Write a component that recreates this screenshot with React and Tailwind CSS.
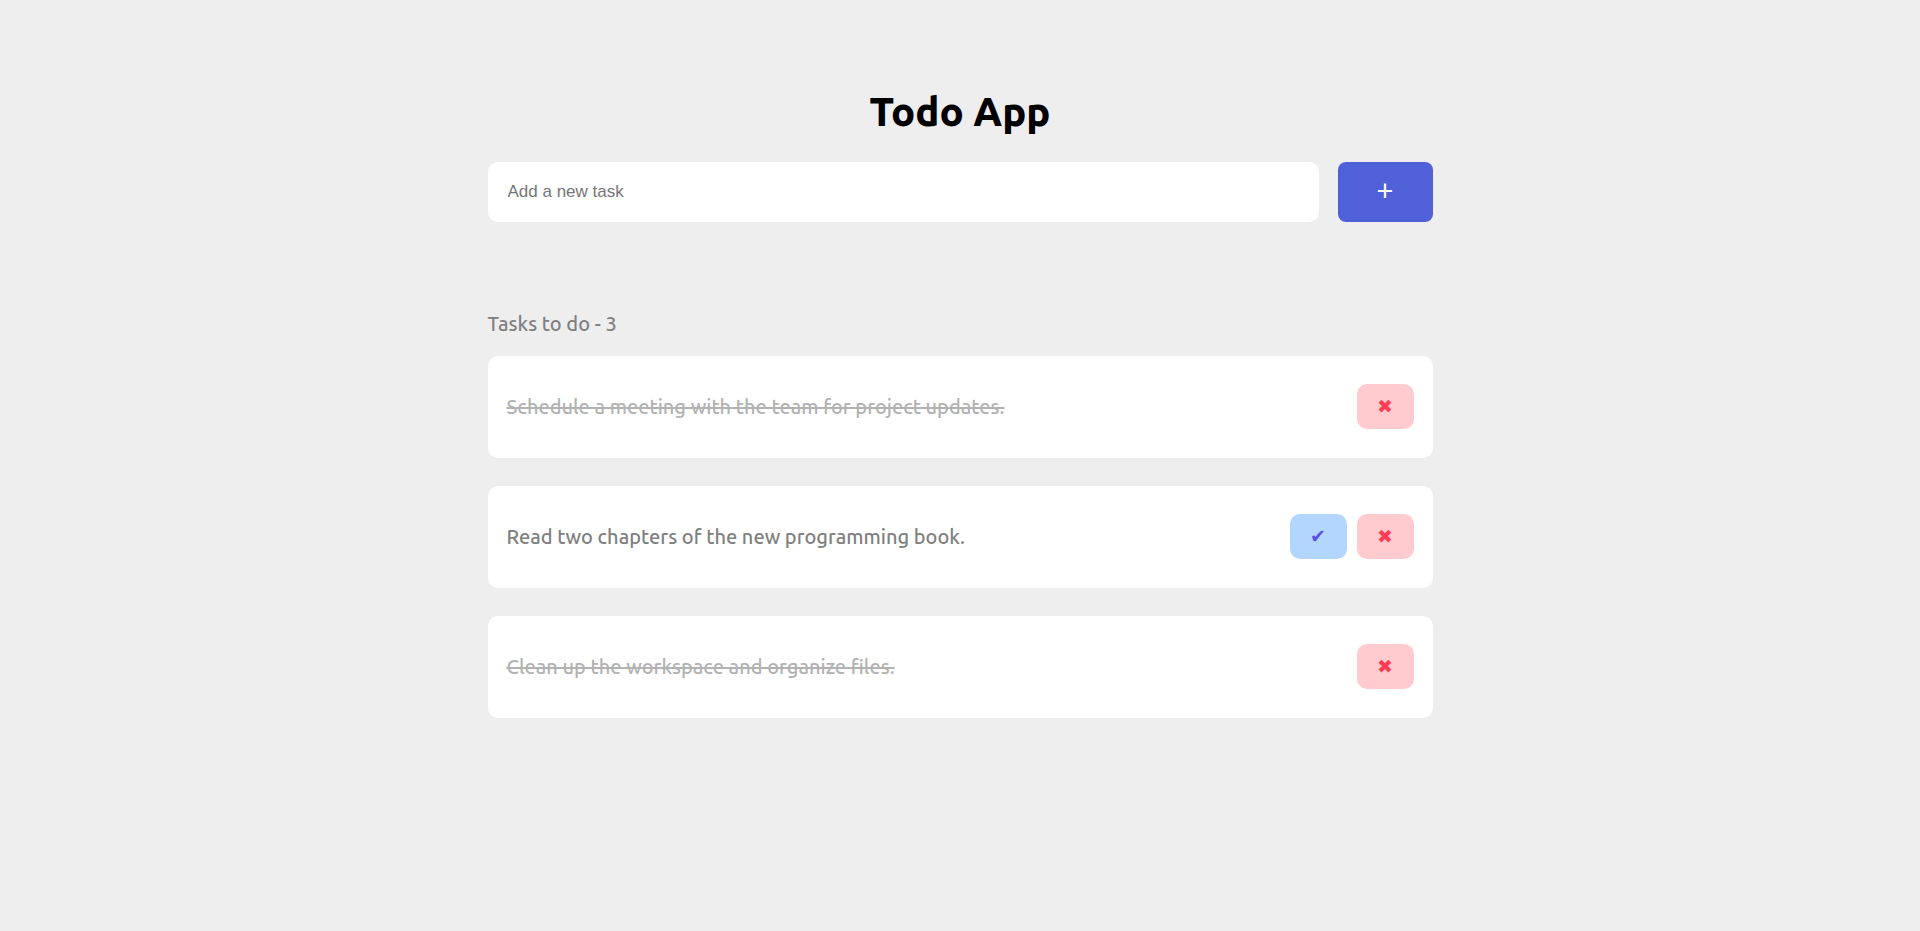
import { useState } from "react";

const initialTasks = [
  { id: 1, title: "Schedule a meeting with the team for project updates.", done: true },
  { id: 2, title: "Read two chapters of the new programming book.", done: false },
  { id: 3, title: "Clean up the workspace and organize files.", done: true },
];

function TaskButton({ label, className, onClick, children }) {
  return (
    <button
      type="button"
      aria-label={label}
      onClick={onClick}
      className={`flex h-[45px] w-[57px] items-center justify-center rounded-[10px] pb-[2px] font-['DejaVu_Sans',sans-serif] text-[19px] leading-6 font-normal ${className}`}
    >
      {children}
    </button>
  );
}

function Task({ task, onComplete, onRemove }) {
  return (
    <li className="flex items-center justify-between gap-4 rounded-[10px] bg-white px-[19px] pt-[28px] pb-[29px]">
      <span className={task.done ? "font-medium text-[#808080] line-through opacity-60" : "font-medium text-[#808080]"}>
        {task.title}
      </span>
      <div className="flex shrink-0 gap-[10px]">
        {!task.done && (
          <TaskButton label="Complete task" className="bg-[#b3d6ff] text-[#5b50e6]" onClick={onComplete}>
            ✔
          </TaskButton>
        )}
        <TaskButton label="Remove task" className="bg-[#ffcbcf] text-[#ff3d57]" onClick={onRemove}>
          ✖
        </TaskButton>
      </div>
    </li>
  );
}

export default function App() {
  const [tasks, setTasks] = useState(initialTasks);
  const [title, setTitle] = useState("");

  const addTask = (event) => {
    event.preventDefault();
    if (!title.trim()) return;
    setTasks([...tasks, { id: Date.now(), title: title.trim(), done: false }]);
    setTitle("");
  };

  return (
    <div className="min-h-screen bg-[#eeeeee] px-4 pt-[84px] pb-12 font-[Ubuntu,'Noto_Sans',sans-serif] text-[20px] leading-7">
      <main className="mx-auto w-full max-w-[945px]">
        <h1 className="text-center text-[40px] leading-[56px] font-extrabold text-black">Todo App</h1>
        <form onSubmit={addTask} className="mt-[22px] flex gap-[19px]">
          <input
            type="text"
            aria-label="New task"
            placeholder="Add a new task"
            value={title}
            onChange={(event) => setTitle(event.target.value)}
            className="h-[60px] min-w-0 flex-1 rounded-[10px] bg-white px-5 font-['Liberation_Sans',Arial,sans-serif] text-[17px] leading-5 text-black outline-none placeholder:text-[#757575]"
          />
          <button
            type="submit"
            aria-label="Add task"
            className="h-[60px] w-[95px] rounded-[8px] bg-[#4f60d9] pb-[3px] font-['Liberation_Sans',Arial,sans-serif] text-[29px] leading-8 text-white"
          >
            +
          </button>
        </form>
        <section className="mt-[88px]">
          <h2 className="font-medium text-[#808080]">Tasks to do - {tasks.length}</h2>
          <ul className="mt-[18px] flex flex-col gap-7">
            {tasks.map((task) => (
              <Task
                key={task.id}
                task={task}
                onComplete={() => setTasks(tasks.map((t) => (t.id === task.id ? { ...t, done: true } : t)))}
                onRemove={() => setTasks(tasks.filter((t) => t.id !== task.id))}
              />
            ))}
          </ul>
        </section>
      </main>
    </div>
  );
}
